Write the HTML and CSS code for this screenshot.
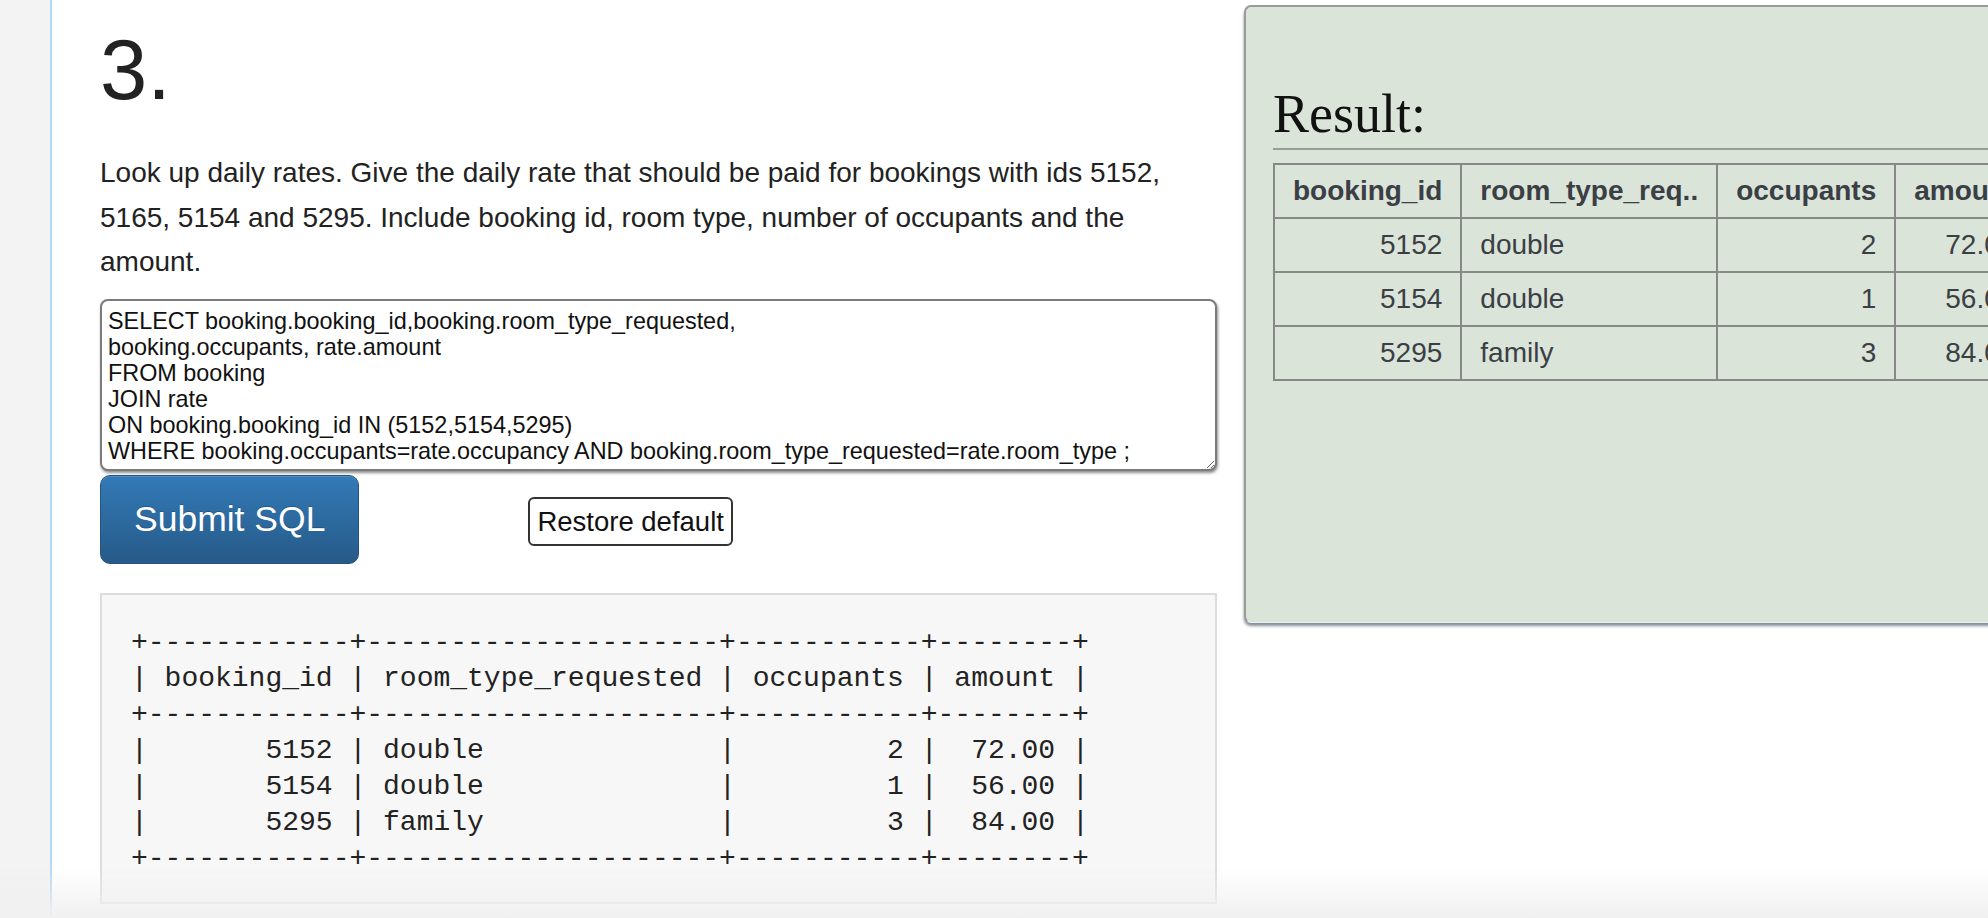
FILE: index.html
```html
<!DOCTYPE html>
<html lang="en">
<head>
<meta charset="utf-8">
<title>SQL exercise 3</title>
<link rel="stylesheet" href="styles.css">
</head>
<body>
<div class="page">
  <aside class="rail"></aside>
  <main class="content">
    <section class="question">
      <h1 class="qnum">3.</h1>
      <p class="qtext">Look up daily rates. Give the daily rate that should be paid for bookings with ids 5152, 5165, 5154 and 5295. Include booking id, room type, number of occupants and the amount.</p>
      <textarea class="sql" spellcheck="false">SELECT booking.booking_id,booking.room_type_requested,
booking.occupants, rate.amount
FROM booking
JOIN rate
ON booking.booking_id IN (5152,5154,5295)
WHERE booking.occupants=rate.occupancy AND booking.room_type_requested=rate.room_type ;</textarea>
      <div class="actions">
        <button class="btn-submit" type="button">Submit SQL</button>
        <button class="btn-restore" type="button">Restore default</button>
      </div>
      <pre class="output">+------------+---------------------+-----------+--------+
| booking_id | room_type_requested | occupants | amount |
+------------+---------------------+-----------+--------+
|       5152 | double              |         2 |  72.00 |
|       5154 | double              |         1 |  56.00 |
|       5295 | family              |         3 |  84.00 |
+------------+---------------------+-----------+--------+</pre>
    </section>
    <section class="result-panel">
      <h2 class="result-title">Result:</h2>
      <table class="result-table">
        <thead>
          <tr><th>booking_id</th><th>room_type_req..</th><th>occupants</th><th>amount</th></tr>
        </thead>
        <tbody>
          <tr><td class="num">5152</td><td>double</td><td class="num">2</td><td class="num">72.00</td></tr>
          <tr><td class="num">5154</td><td>double</td><td class="num">1</td><td class="num">56.00</td></tr>
          <tr><td class="num">5295</td><td>family</td><td class="num">3</td><td class="num">84.00</td></tr>
        </tbody>
      </table>
    </section>
  </main>
</div>
<div class="bottom-fade"></div>
</body>
</html>
```

FILE: styles.css
```css
html, body {
  margin: 0;
  height: 100%;
  overflow: hidden;
}

body {
  font-family: "Liberation Sans", Arial, Helvetica, sans-serif;
  color: #222;
  background: #fff;
}

.page {
  display: flex;
  min-height: 918px;
}

.rail {
  flex: none;
  width: 50px;
  background: #f3f3f3;
  border-right: 2px solid #b3daf6;
}

.content {
  flex: none;
  display: flex;
  align-items: flex-start;
  gap: 27px;
  padding-left: 48px;
}

.question {
  flex: none;
  width: 1117px;
}

.qnum {
  margin: 27px 0 0;
  font-size: 85px;
  line-height: 85px;
  font-weight: normal;
  color: #222;
}

.qtext {
  margin: 39px 0 0;
  font-size: 28px;
  line-height: 44.5px;
  color: #222;
}

.sql {
  display: block;
  box-sizing: border-box;
  width: 1117px;
  height: 172px;
  margin: 14px 0 0;
  padding: 7px 6px 4px;
  border: 2px solid #7b7b7b;
  border-radius: 8px;
  box-shadow: 1px 2px 3px rgba(0, 0, 0, 0.45);
  font-family: "Liberation Sans", Arial, Helvetica, sans-serif;
  font-size: 23.4px;
  line-height: 26px;
  color: #111;
  background: #fff;
  overflow: hidden;
  resize: both;
}

.actions {
  display: flex;
  align-items: baseline;
  margin-top: 4px;
}

.btn-submit {
  font-family: "Liberation Sans", Arial, Helvetica, sans-serif;
  font-size: 35.5px;
  line-height: 47px;
  padding: 20px 33px;
  border: 1px solid #245580;
  border-radius: 10px;
  background: linear-gradient(to bottom, #337ab7 0%, #265a88 100%);
  color: #fff;
  text-shadow: 0 -1px 0 rgba(0, 0, 0, 0.2);
  box-shadow: inset 0 1px 0 rgba(255, 255, 255, 0.15);
}

.btn-restore {
  margin-left: 169px;
  font-family: "Liberation Sans", Arial, Helvetica, sans-serif;
  font-size: 27.5px;
  line-height: 31px;
  padding: 7px 7px;
  border: 2px solid #333;
  border-radius: 6px;
  background: #fff;
  color: #111;
}

.output {
  box-sizing: border-box;
  margin: 29px 0 0;
  padding: 30px 28px 25px 29px;
  border: 2px solid #dcdcdc;
  background: #f7f7f7;
  font-family: "Liberation Mono", "Courier New", monospace;
  font-size: 28px;
  line-height: 36px;
  color: #222;
}

.result-panel {
  flex: none;
  box-sizing: border-box;
  width: 900px;
  height: 618px;
  margin-top: 5px;
  padding-left: 27px;
  background: #dae4d9;
  border-top: 2px solid #9a9a9a;
  border-left: 2px solid #9a9a9a;
  border-bottom: 1px solid #eef0f0;
  border-radius: 7px 0 0 7px;
  box-shadow: 0 3px 3px rgba(70, 78, 100, 0.65);
}

.result-title {
  margin: 77px 0 0;
  padding-bottom: 4px;
  border-bottom: 2px solid #9b9b9b;
  font-family: "Liberation Serif", Georgia, "Times New Roman", serif;
  font-size: 54px;
  line-height: 60px;
  font-weight: normal;
  color: #111;
}

.result-table {
  margin-top: 13px;
  border-collapse: collapse;
  border: 2px solid #888;
  font-size: 28px;
  color: #3b3f45;
}

.result-table th,
.result-table td {
  border: 2px solid #888;
  padding: 10px 18px;
  line-height: 32px;
  text-align: left;
  white-space: nowrap;
}

.result-table th {
  font-weight: bold;
}

.result-table td.num {
  text-align: right;
}

.bottom-fade {
  position: fixed;
  left: 0;
  right: 0;
  bottom: 0;
  height: 50px;
  pointer-events: none;
  background: linear-gradient(to bottom, rgba(242, 242, 242, 0), rgba(240, 240, 240, 1));
}
```
